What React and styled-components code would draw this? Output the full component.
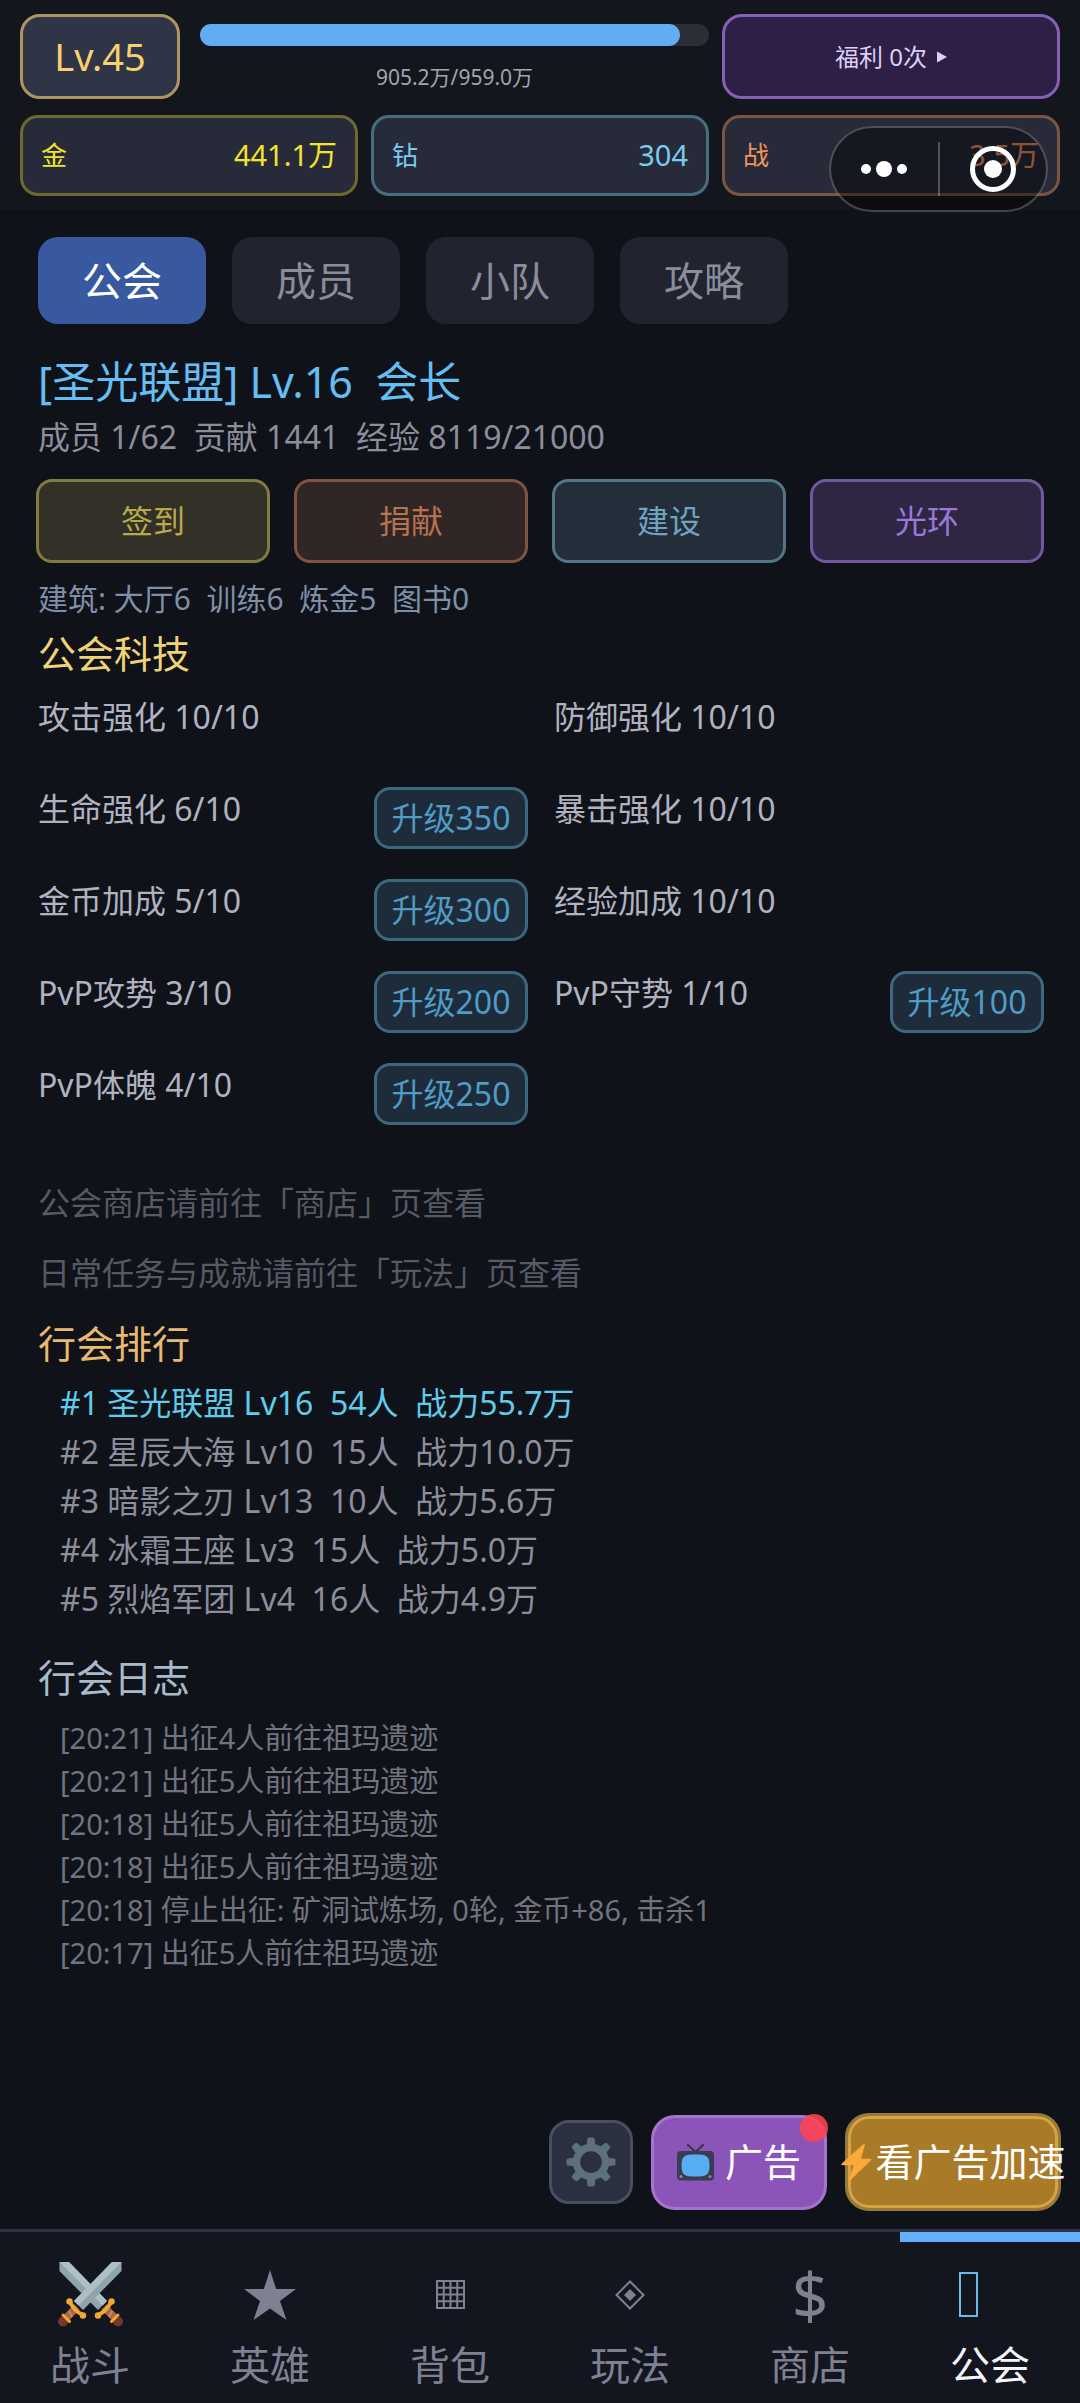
import React, { useState } from 'react';
import styled, { createGlobalStyle } from 'styled-components';

const GlobalStyle = createGlobalStyle`
  * {
    box-sizing: border-box;
  }

  body {
    margin: 0;
    background: #0f1219;
    font-family: 'Noto Sans', 'Noto Sans CJK SC', sans-serif;
    line-height: 1.25;
  }

  button {
    font-family: inherit;
    line-height: inherit;
    cursor: pointer;
  }
`;

const Page = styled.div`
  display: flex;
  flex-direction: column;
  min-height: 100vh;
`;

/* ---------- header ---------- */

const Header = styled.header`
  position: relative;
  display: grid;
  grid-template-columns: repeat(3, 1fr);
  gap: 16px 13px;
  padding: 14px 20px;
  background: #13161d;
`;

const LevelArea = styled.div`
  grid-column: span 2;
  display: flex;
  gap: 20px;
`;

const LevelBadge = styled.div`
  display: flex;
  align-items: center;
  justify-content: center;
  width: 160px;
  height: 85px;
  border: 3px solid #ab9662;
  border-radius: 20px;
  background: #303447;
  color: #f8d070;
  font-size: 38px;
`;

const ExpArea = styled.div`
  flex: 1;
  padding-top: 10px;
  color: #a2a4b0;
  font-size: 21px;
  line-height: 30px;
  text-align: center;
`;

const ExpTrack = styled.div`
  height: 22px;
  margin-bottom: 16px;
  border-radius: 11px;
  background: #2c2d37;
`;

const ExpFill = styled.div`
  height: 100%;
  border-radius: 11px;
  background: #61acf2;
`;

const WelfareButton = styled.button`
  display: flex;
  align-items: center;
  justify-content: center;
  gap: 10px;
  border: 3px solid #8560b5;
  border-radius: 20px;
  background: #2d1f45;
  color: #dfcff6;
  font-size: 24px;
`;

const StatCard = styled.div`
  display: flex;
  align-items: center;
  justify-content: space-between;
  height: 81px;
  padding: 0 18px;
  border: 3px solid ${({ $border }) => $border};
  border-radius: 18px;
  background: #272a39;
  color: ${({ $color }) => $color};
`;

const StatLabel = styled.span`
  font-size: 26px;
`;

const StatValue = styled.span`
  font-size: 29px;
`;

const Capsule = styled.div`
  position: absolute;
  top: 126px;
  right: 32px;
  display: flex;
  align-items: center;
  width: 219px;
  height: 86px;
  border: 2px solid rgba(255, 255, 255, 0.24);
  border-radius: 43px;
  background: rgba(0, 0, 0, 0.42);
`;

const CapsuleButton = styled.button`
  flex: 1;
  display: flex;
  align-items: center;
  justify-content: center;
  height: 54px;
  padding: 0;
  border: none;
  background: none;

  & + & {
    border-left: 2px solid rgba(255, 255, 255, 0.26);
  }
`;

/* ---------- guild page ---------- */

const Main = styled.main`
  flex: 1;
  padding: 27px 36px 0;
`;

const Tabs = styled.div`
  display: flex;
  gap: 26px;
  padding-left: 2px;
`;

const Tab = styled.button`
  width: 168px;
  height: 87px;
  border: none;
  border-radius: 20px;
  background: ${({ $active }) => ($active ? '#38599f' : '#21242f')};
  color: ${({ $active }) => ($active ? '#ffffff' : '#8b8d9b')};
  font-size: 40px;
`;

const GuildName = styled.h1`
  margin: 31px 0 6px;
  padding-left: 2px;
  color: #64bdf3;
  font-size: 43px;
  font-weight: 400;
  line-height: 54px;
  white-space: pre;
`;

const GuildInfo = styled.p`
  margin: 0;
  padding-left: 2px;
  color: #8c8e9b;
  font-size: 32px;
  line-height: 44px;
  white-space: pre;
`;

const Actions = styled.div`
  display: grid;
  grid-template-columns: repeat(4, 1fr);
  gap: 24px;
  margin: 20px 0 16px;
`;

const ActionButton = styled.button`
  height: 84px;
  border: 3px solid ${({ $border }) => $border};
  border-radius: 16px;
  background: ${({ $bg }) => $bg};
  color: ${({ $color }) => $color};
  font-size: 32px;
`;

const Buildings = styled.p`
  margin: 0;
  padding-left: 2px;
  color: #7e8fa6;
  font-size: 30px;
  line-height: 40px;
  white-space: pre;
`;

const SectionTitle = styled.h2`
  margin: ${({ $top }) => $top}px 0 4px;
  padding-left: 2px;
  color: ${({ $color }) => $color};
  font-size: 38px;
  font-weight: 400;
  line-height: 44px;
`;

const TechGrid = styled.div`
  display: grid;
  grid-template-columns: repeat(2, 1fr);
  grid-auto-rows: 92px;
  column-gap: 24px;
  padding-top: 16px;
`;

const TechItem = styled.div`
  display: flex;
  align-items: flex-start;
  justify-content: space-between;
  padding-left: 2px;
  color: #b0b2c0;
  font-size: 32px;
  line-height: 44px;
`;

const UpgradeButton = styled.button`
  width: 154px;
  height: 62px;
  padding: 0;
  border: 3px solid #3d697f;
  border-radius: 16px;
  background: #1e2b3a;
  color: #4f9cc4;
  font-size: 32px;
  line-height: 40px;
`;

const Hint = styled.p`
  margin: 26px 0 0;
  padding-left: 2px;
  color: #575965;
  font-size: 32px;
  line-height: 44px;
`;

const RankList = styled.ol`
  margin: 0;
  padding: 9px 0 0 24px;
  list-style: none;
  font-size: 32px;
  line-height: 49px;
`;

const RankRow = styled.li`
  color: ${({ $own }) => ($own ? '#60cbea' : '#8c8e9b')};
  white-space: pre;
`;

const LogList = styled.ul`
  margin: 0;
  padding: 13px 0 0 24px;
  list-style: none;
  color: #71737f;
  font-size: 29px;
  line-height: 43px;
`;

/* ---------- floating buttons ---------- */

const FloatBar = styled.div`
  display: flex;
  align-items: center;
  justify-content: flex-end;
  gap: 18px;
  padding: 24px 19px 18px;
`;

const SettingsButton = styled.button`
  display: flex;
  align-items: center;
  justify-content: center;
  width: 84px;
  height: 84px;
  padding: 0;
  border: 3px solid #494e62;
  border-radius: 20px;
  background: #2b3040;
`;

const AdButton = styled.button`
  position: relative;
  display: flex;
  align-items: center;
  justify-content: center;
  gap: 11px;
  width: 176px;
  height: 95px;
  padding: 0;
  border: 3px solid #a476cb;
  border-radius: 24px;
  background: #8b54b9;
  color: #ffffff;
  font-size: 38px;
`;

const RedDot = styled.span`
  position: absolute;
  top: -4px;
  right: -4px;
  width: 28px;
  height: 28px;
  border-radius: 50%;
  background: rgba(255, 68, 80, 0.88);
`;

const SpeedButton = styled.button`
  display: flex;
  align-items: center;
  justify-content: center;
  gap: 4px;
  width: 216px;
  height: 98px;
  padding: 0;
  border: 3px solid #98793b;
  border-radius: 24px;
  background: #a97a28;
  box-shadow: inset 0 0 0 3px #d6a543;
  color: #ffffff;
  font-size: 38px;
  white-space: nowrap;

  svg,
  span {
    flex-shrink: 0;
  }
`;

/* ---------- bottom navigation ---------- */

const BottomNav = styled.nav`
  display: grid;
  grid-template-columns: repeat(6, 1fr);
  height: 174px;
  border-top: 3px solid #2d3347;
  background: #14161f;
`;

const NavItem = styled.a`
  display: flex;
  flex-direction: column;
  align-items: center;
  padding-top: 20px;
  box-shadow: ${({ $active }) => ($active ? 'inset 0 10px 0 #62b0fb' : 'none')};
  color: ${({ $active }) => ($active ? '#f4f5fa' : '#7f8193')};
  font-size: 40px;
  line-height: 52px;
  text-decoration: none;
`;

const NavIcon = styled.span`
  display: flex;
  align-items: center;
  justify-content: center;
  height: 85px;
  margin-bottom: 2px;
  color: ${({ $active }) => ($active ? '#68bdea' : 'inherit')};
  font-size: 64px;
`;

/* ---------- icons ---------- */

const DotsIcon = () => (
  <svg width="48" height="20" viewBox="0 0 48 20" fill="#fff">
    <circle cx="6" cy="10" r="5" />
    <circle cx="24" cy="10" r="8" />
    <circle cx="42" cy="10" r="5" />
  </svg>
);

const TargetIcon = () => (
  <svg width="46" height="46" viewBox="0 0 46 46">
    <circle cx="23" cy="23" r="20.5" fill="none" stroke="#fff" strokeWidth="5" />
    <circle cx="23" cy="23" r="9" fill="#fff" />
  </svg>
);

const ArrowIcon = () => (
  <svg width="10" height="12" viewBox="0 0 10 12" fill="currentColor">
    <path d="M0 0.5 10 6 0 11.5z" />
  </svg>
);

const GearIcon = () => (
  <svg width="50" height="50" viewBox="-25 -25 50 50">
    <circle r="14.5" fill="none" stroke="#5f707d" strokeWidth="7.4" />
    {[0, 45, 90, 135, 180, 225, 270, 315].map((angle) => (
      <path
        key={angle}
        d="M-4.6 -15 -3.6 -23Q-3.4 -24.5 -2 -24.5H2Q3.4 -24.5 3.6 -23L4.6 -15z"
        fill="#5f707d"
        transform={`rotate(${angle})`}
      />
    ))}
  </svg>
);

const TvIcon = () => (
  <svg width="37" height="37" viewBox="0 0 37 37">
    <path d="M11 1 18.5 8 26 1" fill="none" stroke="#38323f" strokeWidth="2" strokeLinecap="round" />
    <rect x="0" y="7" width="37" height="29.5" rx="4" fill="#393c52" />
    <path
      d="M18.5 10.5C29 10.5 32.5 11.5 32.5 21.5S29 32.5 18.5 32.5 4.5 31.5 4.5 21.5 8 10.5 18.5 10.5z"
      fill="#58aef0"
    />
    <circle cx="4" cy="32.5" r="1.6" fill="#7d8a98" />
    <circle cx="33" cy="32.5" r="1.6" fill="#7d8a98" />
  </svg>
);

const BoltIcon = () => (
  <svg width="31" height="37" viewBox="0 0 31 37">
    <path
      d="M24 0.5 20 14.7H29.5Q31 15 30 16.2L9.5 36Q7.5 37 8 35L12.8 21.3H1.3Q-0.5 21 0.8 19.6L22 0.5Q23.7 -0.5 24 0.5z"
      fill="#fba938"
    />
  </svg>
);

const SwordHalf = () => (
  <g>
    <path d="M54 0H63.5V9L25 48 16 39z" fill="#90a4ae" />
    <path d="M54 0H63.5L20.5 43.5 16 39z" fill="#b0bec5" />
    <path d="M19 45 8 56" stroke="#a9664a" strokeWidth="7.5" />
    <path d="M15.5 44.5 19 51M11 49 14 55" stroke="#c98563" strokeWidth="2" />
    <circle cx="5" cy="59.5" r="5" fill="#73392c" />
    <path d="M5 53 11.5 59.5" stroke="#f2a92f" strokeWidth="3" strokeLinecap="round" />
    <path d="M12 40Q16 49 25 53" fill="none" stroke="#f2a92f" strokeWidth="4" />
    <circle cx="11.5" cy="39.5" r="3.2" fill="#f2a92f" />
    <circle cx="25" cy="53.5" r="3.2" fill="#f2a92f" />
  </g>
);

const SwordsIcon = () => (
  <svg width="65" height="65" viewBox="0 0 65 65">
    <g transform="matrix(-1 0 0 1 65 0)">
      <SwordHalf />
    </g>
    <SwordHalf />
  </svg>
);

const StarIcon = () => (
  <svg width="52" height="50" viewBox="0 0 52 50" fill="currentColor">
    <path d="M26 0 32.2 19H52L36 31 42.5 50 26 38.5 9.5 50 16 31 0 19H19.8z" />
  </svg>
);

const GridIcon = () => (
  <svg width="29" height="29" viewBox="0 0 29 29" fill="none" stroke="currentColor" strokeWidth="2">
    <path d="M1 1H28V28H1zM7.75 1V28M14.5 1V28M21.25 1V28M1 7.75H28M1 14.5H28M1 21.25H28" />
  </svg>
);

const DiamondIcon = () => (
  <svg width="30" height="30" viewBox="0 0 30 30">
    <path d="M15 1.5 28.5 15 15 28.5 1.5 15z" fill="none" stroke="currentColor" strokeWidth="2" />
    <path d="M15 9 21 15 15 21 9 15z" fill="currentColor" />
  </svg>
);

const FrameIcon = () => (
  <svg width="62" height="46" viewBox="0 0 62 46">
    <rect x="1" y="1" width="17" height="43" fill="none" stroke="currentColor" strokeWidth="2" />
  </svg>
);

/* ---------- data ---------- */

const stats = [
  { label: '金', value: '441.1万', color: '#f3e42b', border: '#6c6a2f' },
  { label: '钻', value: '304', color: '#78cdee', border: '#486d7e' },
  { label: '战', value: '3.5万', color: '#f3925a', border: '#7a5544' },
];

const tabs = ['公会', '成员', '小队', '攻略'];

const actions = [
  { label: '签到', bg: '#333127', border: '#827b40', color: '#b9a94a' },
  { label: '捐献', bg: '#302626', border: '#805440', color: '#b5734f' },
  { label: '建设', bg: '#242e3a', border: '#527687', color: '#6fa3bf' },
  { label: '光环', bg: '#2e2643', border: '#70589f', color: '#9c79d8' },
];

const techs = [
  { name: '攻击强化', level: 10 },
  { name: '防御强化', level: 10 },
  { name: '生命强化', level: 6, cost: 350 },
  { name: '暴击强化', level: 10 },
  { name: '金币加成', level: 5, cost: 300 },
  { name: '经验加成', level: 10 },
  { name: 'PvP攻势', level: 3, cost: 200 },
  { name: 'PvP守势', level: 1, cost: 100 },
  { name: 'PvP体魄', level: 4, cost: 250 },
];

const ranks = [
  { name: '圣光联盟', level: 16, members: 54, power: '55.7万', own: true },
  { name: '星辰大海', level: 10, members: 15, power: '10.0万' },
  { name: '暗影之刃', level: 13, members: 10, power: '5.6万' },
  { name: '冰霜王座', level: 3, members: 15, power: '5.0万' },
  { name: '烈焰军团', level: 4, members: 16, power: '4.9万' },
];

const logs = [
  '[20:21] 出征4人前往祖玛遗迹',
  '[20:21] 出征5人前往祖玛遗迹',
  '[20:18] 出征5人前往祖玛遗迹',
  '[20:18] 出征5人前往祖玛遗迹',
  '[20:18] 停止出征: 矿洞试炼场, 0轮, 金币+86, 击杀1',
  '[20:17] 出征5人前往祖玛遗迹',
];

const navItems = [
  { id: 'battle', label: '战斗', icon: <SwordsIcon /> },
  { id: 'heroes', label: '英雄', icon: <StarIcon /> },
  { id: 'bag', label: '背包', icon: <GridIcon /> },
  { id: 'play', label: '玩法', icon: <DiamondIcon /> },
  { id: 'shop', label: '商店', icon: '$' },
  { id: 'guild', label: '公会', icon: <FrameIcon /> },
];

const exp = { current: 905.2, max: 959.0 };

const App = () => {
  const [activeTab, setActiveTab] = useState('公会');
  const [activeNav, setActiveNav] = useState('guild');

  return (
    <Page>
      <GlobalStyle />
      <Header>
        <LevelArea>
          <LevelBadge>Lv.45</LevelBadge>
          <ExpArea>
            <ExpTrack>
              <ExpFill style={{ width: `${(exp.current / exp.max) * 100}%` }} />
            </ExpTrack>
            {`${exp.current.toFixed(1)}万/${exp.max.toFixed(1)}万`}
          </ExpArea>
        </LevelArea>
        <WelfareButton>
          福利 0次
          <ArrowIcon />
        </WelfareButton>
        {stats.map((stat) => (
          <StatCard key={stat.label} $color={stat.color} $border={stat.border}>
            <StatLabel>{stat.label}</StatLabel>
            <StatValue>{stat.value}</StatValue>
          </StatCard>
        ))}
        <Capsule>
          <CapsuleButton>
            <DotsIcon />
          </CapsuleButton>
          <CapsuleButton>
            <TargetIcon />
          </CapsuleButton>
        </Capsule>
      </Header>

      <Main>
        <Tabs>
          {tabs.map((tab) => (
            <Tab key={tab} $active={tab === activeTab} onClick={() => setActiveTab(tab)}>
              {tab}
            </Tab>
          ))}
        </Tabs>

        <GuildName>{'[圣光联盟] Lv.16  会长'}</GuildName>
        <GuildInfo>{'成员 1/62  贡献 1441  经验 8119/21000'}</GuildInfo>

        <Actions>
          {actions.map((action) => (
            <ActionButton
              key={action.label}
              $bg={action.bg}
              $border={action.border}
              $color={action.color}
            >
              {action.label}
            </ActionButton>
          ))}
        </Actions>

        <Buildings>{'建筑: 大厅6  训练6  炼金5  图书0'}</Buildings>

        <SectionTitle $top={12} $color="#efd377">公会科技</SectionTitle>
        <TechGrid>
          {techs.map((tech) => (
            <TechItem key={tech.name}>
              <span>{`${tech.name} ${tech.level}/10`}</span>
              {tech.cost && <UpgradeButton>{`升级${tech.cost}`}</UpgradeButton>}
            </TechItem>
          ))}
        </TechGrid>

        <Hint>公会商店请前往「商店」页查看</Hint>
        <Hint>日常任务与成就请前往「玩法」页查看</Hint>

        <SectionTitle $top={26} $color="#e9b96e">行会排行</SectionTitle>
        <RankList>
          {ranks.map((rank, index) => (
            <RankRow key={rank.name} $own={rank.own}>
              {`#${index + 1} ${rank.name} Lv${rank.level}  ${rank.members}人  战力${rank.power}`}
            </RankRow>
          ))}
        </RankList>

        <SectionTitle $top={32} $color="#a9bacb">行会日志</SectionTitle>
        <LogList>
          {logs.map((log, index) => (
            <li key={index}>{log}</li>
          ))}
        </LogList>
      </Main>

      <FloatBar>
        <SettingsButton aria-label="设置">
          <GearIcon />
        </SettingsButton>
        <AdButton>
          <TvIcon />
          广告
          <RedDot />
        </AdButton>
        <SpeedButton>
          <BoltIcon />
          <span>看广告加速</span>
        </SpeedButton>
      </FloatBar>

      <BottomNav>
        {navItems.map((item) => (
          <NavItem
            key={item.id}
            href={`#${item.id}`}
            $active={item.id === activeNav}
            onClick={() => setActiveNav(item.id)}
          >
            <NavIcon $active={item.id === activeNav}>{item.icon}</NavIcon>
            {item.label}
          </NavItem>
        ))}
      </BottomNav>
    </Page>
  );
};

export default App;
